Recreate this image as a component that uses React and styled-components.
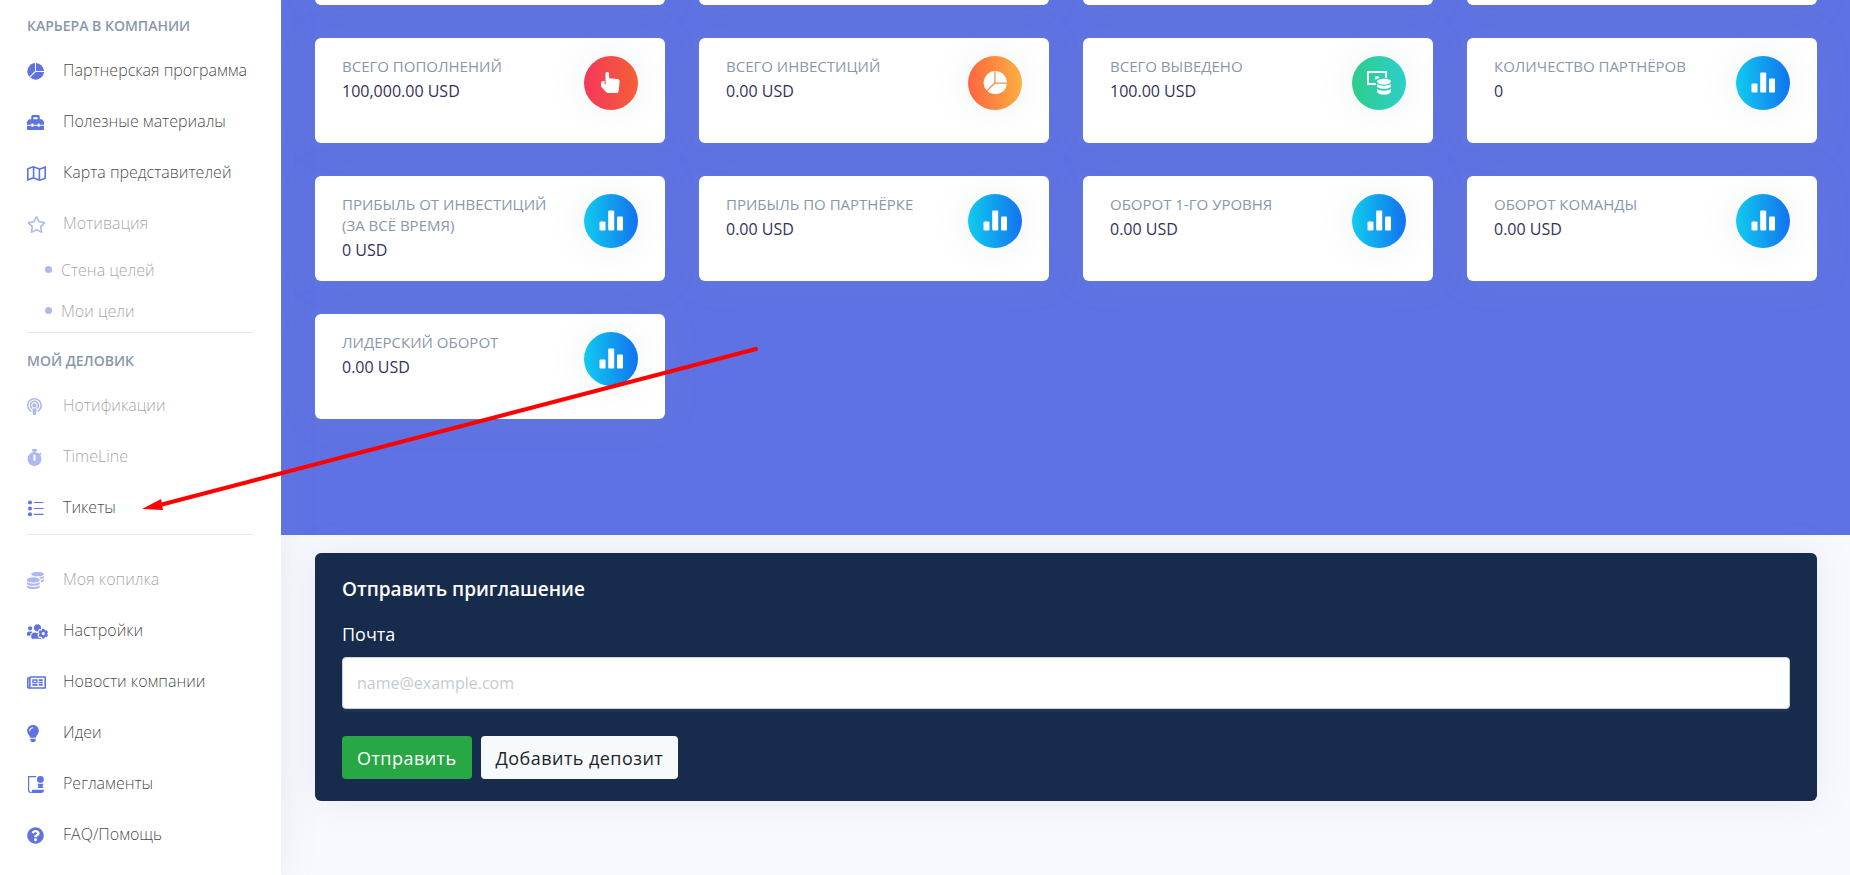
import React from "react";
import styled, { createGlobalStyle, css } from "styled-components";
import {
  FaToolbox,
  FaRegMap,
  FaRegStar,
  FaPodcast,
  FaStopwatch,
  FaCoins,
  FaUsersCog,
  FaRegNewspaper,
  FaLightbulb,
  FaQuestionCircle,
} from "react-icons/fa";

const GlobalStyle = createGlobalStyle`
  *, *::before, *::after { box-sizing: border-box; }
  body {
    margin: 0;
    background: #f8f9fe;
    color: #32325d;
    font-family: "Open Sans", sans-serif;
    font-size: 17px;
    line-height: 24px;
    overflow-x: hidden;
  }
`;

const PieIcon = () => (
  <svg viewBox="0 0 17 17" width="17" height="17" fill="currentColor">
    <path d="M8 0v8.100L2.300 13.800A8.500 8.500 0 0 1 8 0z" />
    <path d="M9 0a8.500 8.500 0 0 1 8 8H9z" />
    <path d="M17 9a8.500 8.500 0 0 1-13.900 5.600L8.700 9z" />
  </svg>
);

const ListIcon = () => (
  <svg viewBox="0 0 17 17" width="17" height="17" fill="currentColor">
    <circle cx="3" cy="2.600" r="2" />
    <circle cx="3" cy="8.500" r="2" />
    <circle cx="3" cy="14.200" r="2" />
    <path d="M7 2h9.500v1.100H7zM7 8h9.500v1.100H7zM7 13.800h9.500v1.100H7z" />
  </svg>
);

const DiplomaIcon = () => (
  <svg viewBox="0 0 17 17" width="17" height="17" fill="currentColor">
    <path d="M1 0h8v1.200H2.200v12.600a2 2 0 0 0 1.800 2.200V17a3 3 0 0 1-3-3z" />
    <circle cx="13.400" cy="3.400" r="3.400" />
    <path d="M10.800 7.800h5.400v1.200l-1 .9 1 1V12h-5.400v-1.200l1-.9-1-.9z" />
    <path d="M5 13.800h12V14a3 3 0 0 1-3 3H3.500c1 0 1.500-1.500 1.500-3.200z" />
  </svg>
);

const HandIcon = () => (
  <svg viewBox="0 0 22 22" width="22" height="22" fill="currentColor">
    <path d="M5.500 1.800C5.500.6 6.300 0 7.300 0s1.800.7 1.800 1.700v4.600l8 .7c1.600.2 2.700 1.200 2.500 2.800l-.9 8.600c-.1 1.600-1 2.600-2.600 2.600H8c-1 0-1.700-.5-2.200-1.200L1.400 15C1 14.400 1 13.800 1 13v-1.300c0-1.500.8-2.500 2.200-2.700L5.500 8.700z" />
    <path d="M4.600 8.500v4.100h1V8.300z" fill="#f5404f" />
  </svg>
);

const CardPieIcon = () => (
  <svg viewBox="0 0 22 22" width="24" height="24" fill="currentColor">
    <path d="M10.400 0v10.600L3.200 17.800A10.900 10.900 0 0 1 10.400 0z" />
    <path d="M11.500 0A11 11 0 0 1 22 10.500H11.500z" />
    <path d="M22 11.600A11 11 0 0 1 4 18.600l7-7z" />
  </svg>
);

const MoneyIcon = () => (
  <svg viewBox="0 0 24 24" width="24" height="24" fill="currentColor">
    <path d="M0 0h20v7h-2V2H2v10h7v2H0z" />
    <path d="M8.200 8.400A2.300 2.300 0 1 1 12.500 7c-1.600.3-2.700.8-3.300 1.700z" />
    <ellipse cx="17" cy="10.600" rx="7" ry="2.900" />
    <path d="M10 13c1.500 1.200 4 1.700 7 1.700s5.500-.5 7-1.700v2.400c-.8 1.500-3.700 2.300-7 2.300s-6.200-.8-7-2.300z" />
    <path d="M10 18c1.500 1.200 4 1.700 7 1.700s5.500-.5 7-1.700v3c-.8 1.700-3.700 2.600-7 2.600s-6.200-.9-7-2.600z" />
  </svg>
);

const BarsIcon = () => (
  <svg viewBox="0 0 24 22" width="24" height="22" fill="currentColor">
    <rect x="0.500" y="11.500" width="6" height="9" rx="1" />
    <rect x="9.200" y="0.500" width="6" height="20" rx="1" />
    <rect x="18" y="6.500" width="6" height="14" rx="1" />
  </svg>
);

const Page = styled.div`
  position: relative;
  display: grid;
  grid-template-columns: 281px minmax(0, 1fr);
  min-height: 100vh;
`;

const Sidebar = styled.nav`
  position: relative;
  z-index: 1;
  padding: 14px 28px 16px 27px;
  background: #fff;
  box-shadow: 0 0 34px rgba(136, 152, 170, 0.15);
`;

const SidebarHeading = styled.h6`
  margin: 0;
  color: #8898aa;
  font-size: 14px;
  font-weight: 600;
  line-height: 24px;
  text-transform: uppercase;
`;

const NavList = styled.ul`
  display: flex;
  flex-direction: column;
  margin: 0;
  padding: ${(p) => p.$top || 0}px 0 ${(p) => p.$bottom || 0}px;
  list-style: none;
`;

const NavLink = styled.a`
  display: flex;
  align-items: center;
  height: ${(p) => (p.$sub ? 41 : 51)}px;
  padding-left: ${(p) => (p.$sub ? 18 : 0)}px;
  color: rgba(0, 0, 0, 0.75);
  font-size: 16px;
  font-weight: 300;
  text-decoration: none;
  white-space: nowrap;
  opacity: ${(p) => (p.$muted ? 0.5 : 1)};
`;

const NavIcon = styled.span`
  display: flex;
  flex: 0 0 36px;
  padding-top: 4px;
  color: #5e72e4;
  svg { width: ${(p) => p.$width}px; height: 17px; }
`;

const Dot = styled.span`
  width: 7px;
  height: 7px;
  margin-right: 9px;
  border-radius: 50%;
  background: #5e72e4;
`;

const Divider = styled.hr`
  width: 100%;
  margin: 0;
  border: 0;
  border-top: 1px solid rgba(0, 0, 0, 0.1);
`;

const SecondHeading = styled(SidebarHeading)`
  margin-top: 16px;
`;

const Main = styled.main`
  min-width: 0;
`;

const StatsBand = styled.section`
  height: 535px;
  padding: 0 33px 0 34px;
  background: #5e72e4;
  overflow: hidden;
`;

const StatsGrid = styled.div`
  display: grid;
  grid-template-columns: repeat(4, minmax(0, 1fr));
  grid-auto-rows: 105px;
  gap: 33px 34px;
  margin-top: -100px;
`;

const StatCard = styled.article`
  display: flex;
  justify-content: space-between;
  gap: 18px;
  padding: 18px 27px;
  border-radius: 6px;
  background: #fff;
  box-shadow: 0 0 34px rgba(136, 152, 170, 0.15);
`;

const StatTitle = styled.h5`
  margin: 0;
  color: #8898aa;
  font-size: 15px;
  font-weight: 500;
  line-height: 21px;
  text-transform: uppercase;
`;

const StatValue = styled.p`
  margin: 2px 0 0;
  color: #32325d;
  font-size: 16px;
  font-weight: 500;
  line-height: 24px;
`;

const gradients = {
  red: css`linear-gradient(87deg, #f5365c 0%, #f56036 100%)`,
  orange: css`linear-gradient(87deg, #ff6340 0%, #fbb140 100%)`,
  green: css`linear-gradient(87deg, #2dce89 0%, #2dcecc 100%)`,
  blue: css`linear-gradient(87deg, #11cdef 0%, #1171ef 100%)`,
};

const StatBadge = styled.span`
  display: flex;
  flex: 0 0 54px;
  align-items: center;
  justify-content: center;
  height: 54px;
  border-radius: 50%;
  background: ${(p) => gradients[p.$tone]};
  box-shadow: 0 0 34px rgba(136, 152, 170, 0.15);
  color: #fff;
`;

const InviteSection = styled.section`
  padding: 18px 33px 40px 34px;
`;

const InviteForm = styled.form`
  padding: 24px 27px 22px;
  border-radius: 6px;
  background: #172b4d;
  box-shadow: 0 0 34px rgba(136, 152, 170, 0.15);
  color: #fff;
`;

const InviteTitle = styled.h3`
  margin: 0;
  font-size: 19px;
  font-weight: 600;
  line-height: 24px;
`;

const FieldLabel = styled.label`
  display: block;
  margin: 20px 0 10px;
  font-size: 18px;
  line-height: 26px;
`;

const EmailInput = styled.input`
  display: block;
  width: 100%;
  height: 52px;
  padding: 0 14px;
  border: 1px solid #cad1d7;
  border-radius: 4px;
  background: #fff;
  box-shadow: 0 3px 2px rgba(233, 236, 239, 0.05);
  color: #8898aa;
  font: 400 16px/24px "Open Sans", sans-serif;
  &::placeholder { color: #adb5bd; opacity: 0.7; }
`;

const Actions = styled.div`
  display: flex;
  gap: 9px;
  margin-top: 27px;
`;

const ActionButton = styled.button`
  height: 43px;
  padding: 0 15px;
  border: 0;
  border-radius: 4px;
  background: ${(p) => (p.$primary ? "#28a745" : "#f7fafc")};
  color: ${(p) => (p.$primary ? "#fff" : "#212529")};
  font: ${(p) => (p.$primary ? 500 : 400)} 18px/24px "Open Sans", sans-serif;
  letter-spacing: 0.025em;
`;

const PointerArrow = styled.svg`
  position: absolute;
  z-index: 2;
  top: 345px;
  left: 140px;
  pointer-events: none;
`;

const careerLinks = [
  { label: "Партнерская программа", icon: PieIcon },
  { label: "Полезные материалы", icon: FaToolbox },
  { label: "Карта представителей", icon: FaRegMap, width: 19 },
  { label: "Мотивация", icon: FaRegStar, width: 19, muted: true },
];

const goalLinks = ["Стена целей", "Мои цели"];

const businessLinks = [
  { label: "Нотификации", icon: FaPodcast, width: 15, muted: true },
  { label: "TimeLine", icon: FaStopwatch, width: 15, muted: true },
  { label: "Тикеты", icon: ListIcon },
];

const otherLinks = [
  { label: "Моя копилка", icon: FaCoins, muted: true },
  { label: "Настройки", icon: FaUsersCog, width: 21 },
  { label: "Новости компании", icon: FaRegNewspaper, width: 19 },
  { label: "Идеи", icon: FaLightbulb, width: 12 },
  { label: "Регламенты", icon: DiplomaIcon },
  { label: "FAQ/Помощь", icon: FaQuestionCircle },
];

const stats = [
  { title: "Всего пополнений", value: "100,000.00 USD", icon: HandIcon, tone: "red" },
  { title: "Всего инвестиций", value: "0.00 USD", icon: CardPieIcon, tone: "orange" },
  { title: "Всего выведено", value: "100.00 USD", icon: MoneyIcon, tone: "green" },
  { title: "Количество партнёров", value: "0", icon: BarsIcon, tone: "blue" },
  { title: "Прибыль от инвестиций (за всё время)", value: "0 USD", icon: BarsIcon, tone: "blue" },
  { title: "Прибыль по партнёрке", value: "0.00 USD", icon: BarsIcon, tone: "blue" },
  { title: "Оборот 1-го уровня", value: "0.00 USD", icon: BarsIcon, tone: "blue" },
  { title: "Оборот команды", value: "0.00 USD", icon: BarsIcon, tone: "blue" },
  { title: "Лидерский оборот", value: "0.00 USD", icon: BarsIcon, tone: "blue" },
];

const NavItems = ({ items, top, bottom }) => (
  <NavList $top={top} $bottom={bottom}>
    {items.map(({ label, icon: Icon, width = 17, muted }) => (
      <li key={label}>
        <NavLink href="#" $muted={muted}>
          <NavIcon $width={width}><Icon /></NavIcon>
          {label}
        </NavLink>
      </li>
    ))}
  </NavList>
);

export default function App() {
  return (
    <>
      <GlobalStyle />
      <Page>
        <Sidebar>
          <SidebarHeading>Карьера в компании</SidebarHeading>
          <NavItems items={careerLinks} top={6} bottom={1} />
          <NavList $bottom={1}>
            {goalLinks.map((label) => (
              <li key={label}>
                <NavLink href="#" $sub $muted><Dot />{label}</NavLink>
              </li>
            ))}
          </NavList>
          <Divider />
          <SecondHeading>Мой деловик</SecondHeading>
          <NavItems items={businessLinks} top={6} bottom={2} />
          <Divider />
          <NavItems items={otherLinks} top={18} />
        </Sidebar>
        <Main>
          <StatsBand>
            <StatsGrid>
              {[0, 1, 2, 3].map((n) => <StatCard key={n} />)}
              {stats.map(({ title, value, icon: Icon, tone }) => (
                <StatCard key={title}>
                  <div>
                    <StatTitle>{title}</StatTitle>
                    <StatValue>{value}</StatValue>
                  </div>
                  <StatBadge $tone={tone}><Icon /></StatBadge>
                </StatCard>
              ))}
            </StatsGrid>
          </StatsBand>
          <InviteSection>
            <InviteForm>
              <InviteTitle>Отправить приглашение</InviteTitle>
              <FieldLabel htmlFor="email">Почта</FieldLabel>
              <EmailInput id="email" type="email" placeholder="name@example.com" />
              <Actions>
                <ActionButton type="submit" $primary>Отправить</ActionButton>
                <ActionButton type="button">Добавить депозит</ActionButton>
              </Actions>
            </InviteForm>
          </InviteSection>
        </Main>
        <PointerArrow width="620" height="170" viewBox="0 0 620 170" aria-hidden="true">
          <path d="M616 4L20 160" stroke="#f00" strokeWidth="4" strokeLinecap="round" />
          <path d="M2 164L21 154L23 165z" fill="#f00" />
        </PointerArrow>
      </Page>
    </>
  );
}
